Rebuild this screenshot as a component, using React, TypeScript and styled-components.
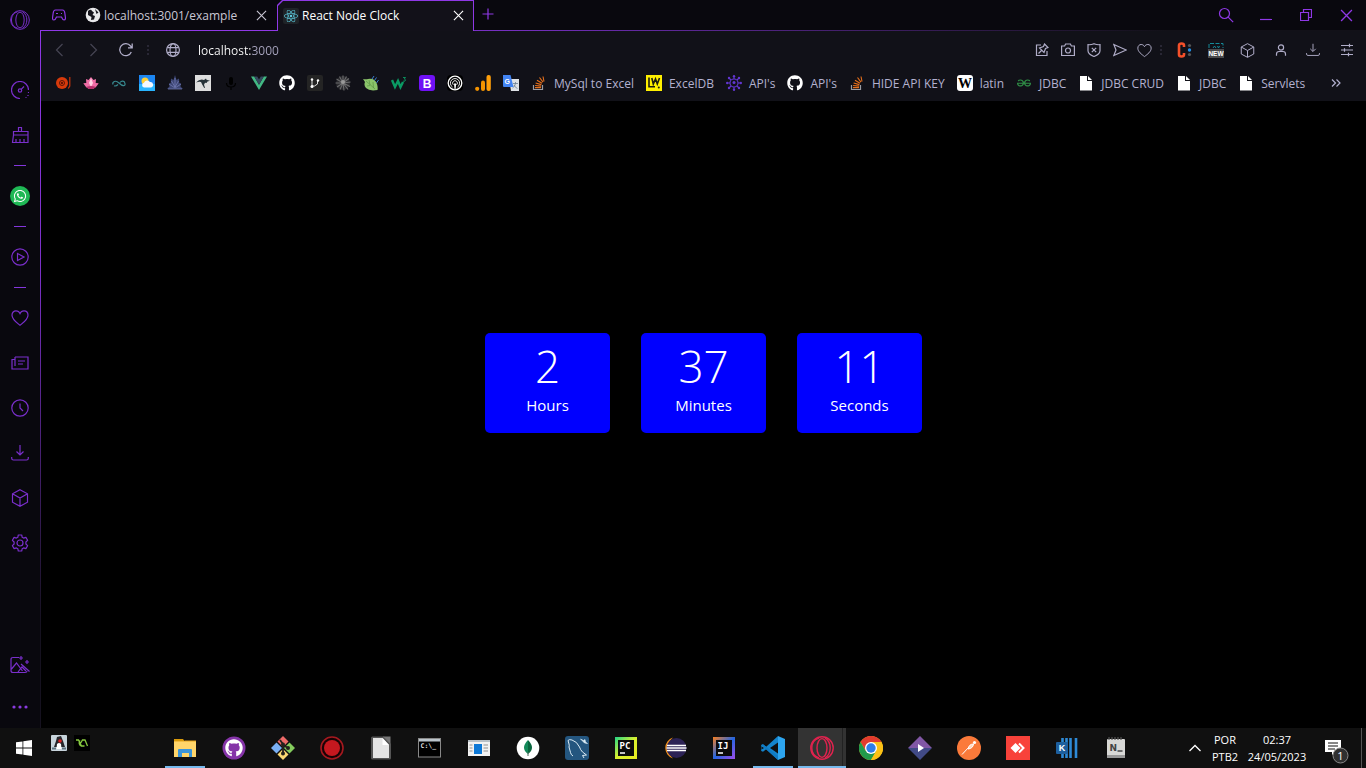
import React from 'react';
import styled, { createGlobalStyle } from 'styled-components';
import { FaGithub, FaReact, FaWhatsapp } from 'react-icons/fa';
import { SiGeeksforgeeks } from 'react-icons/si';

const Global = createGlobalStyle`
  * { box-sizing: border-box; }
  html, body { margin: 0; background: #000; }
  body, button, input { font-family: "Open Sans", "Noto Sans", sans-serif; font-size: 12px; }
  button { border: 0; padding: 0; margin: 0; background: none; color: inherit; display: flex; align-items: center; justify-content: center; flex: none; }
  a { color: inherit; text-decoration: none; }
  svg { display: block; flex: none; }
`;

const Desktop = styled.div`
  display: flex;
  flex-direction: column;
  min-height: 100vh;
  color: #fff;
`;
const BrowserWindow = styled.div`
  flex: 1;
  display: flex;
  background: #09080e;
`;
const Sidebar = styled.nav`
  width: 40px;
  display: flex;
  flex-direction: column;
  align-items: center;
  color: #7a2fcc;
`;
const SideLogo = styled.button`
  && { width: 40px; height: 40px; margin-bottom: 27px; }
`;
const SideButton = styled.button<{ $h?: number }>`
  && { width: 40px; height: ${p => p.$h ?? 45}px; padding-right: 1px; }
`;
const SideBottom = styled.div`
  margin-top: auto;
`;
const SideDivider = styled.hr`
  width: 12px;
  height: 1px;
  margin: 8px 0 7px;
  border: 0;
  background: #8436dc;
`;
const WhatsappBadge = styled.span`
  width: 20px;
  height: 20px;
  border-radius: 50%;
  background: #1fb855;
  color: #fff;
  display: grid;
  place-items: center;
`;

const Column = styled.div`
  flex: 1;
  min-width: 0;
  display: flex;
  flex-direction: column;
`;
const TabBar = styled.div`
  height: 31px;
  display: flex;
  align-items: stretch;
  color: #8f38e6;
  background: linear-gradient(90deg, #8f38e6 0%, #8f38e6 20%, #6f2db6 38%, #121118 85%) 0 30px / 100% 1px no-repeat;
`;
const TabMenu = styled.button`
  && { width: 39px; height: 30px; padding-right: 1px; }
`;
const Tab = styled.div<{ $active?: boolean }>`
  position: relative;
  width: ${p => (p.$active ? 197 : 198)}px;
  height: ${p => (p.$active ? 31 : 30)}px;
  padding: 0 9px 0 6px;
  display: flex;
  align-items: center;
  gap: 3px;
  color: ${p => (p.$active ? '#fff' : '#c9c7d4')};
  ${p => p.$active && `
    isolation: isolate;
    background: #8f38e6;
    clip-path: polygon(0 5px, 5px 0, 100% 0, 100% 100%, 0 100%);
    &::before {
      content: '';
      position: absolute;
      z-index: -1;
      inset: 1px 1px 0;
      background: #121119;
      clip-path: polygon(0 5px, 5px 0, 100% 0, 100% 100%, 0 100%);
    }
  `}
`;
const TabTitle = styled.span`
  flex: 1;
  white-space: nowrap;
`;
const TabClose = styled.button`
  && { width: 14px; height: 14px; }
`;
const NewTab = styled.button`
  && { width: 28px; height: 28px; }
`;
const WindowControls = styled.div`
  margin-left: auto;
  display: flex;
  button { width: 40px; height: 30px; }
`;
const Framed = styled.div`
  flex: 1;
  display: flex;
  flex-direction: column;
  padding-left: 1px;
  background: linear-gradient(#8f38e6 0, #7a30c6 35%, #15111f 85%) 0 0 / 1px 100% no-repeat;
`;
const Toolbar = styled.div`
  height: 38px;
  padding-left: 2px;
  display: flex;
  align-items: center;
  background: #111118;
  color: #b0adc8;
`;
const ToolButton = styled.button<{ $w: number; $dim?: boolean }>`
  && { width: ${p => p.$w}px; height: 30px; color: ${p => (p.$dim ? '#464553' : 'inherit')}; }
`;
const Dots = styled.span`
  width: 12px;
  height: 12px;
  background: radial-gradient(circle, #292735 1px, transparent 1px) 0 0 / 12px 4px;
`;
const Address = styled.input`
  flex: 1;
  min-width: 0;
  height: 24px;
  margin-left: 6px;
  padding: 0;
  border: 0;
  outline: 0;
  color: transparent;
  background: linear-gradient(90deg, #fff 53px, #a9a6c0 53px);
  background-clip: text;
  -webkit-background-clip: text;
`;
const Bookmarks = styled.div`
  height: 32px;
  padding: 0 24px 4px 14px;
  display: flex;
  align-items: center;
  gap: 12px;
  background: #111118;
  color: #b3b1d0;
`;
const Bookmark = styled.a`
  height: 24px;
  display: flex;
  align-items: center;
  gap: 7px;
  white-space: nowrap;
`;
const More = styled.button`
  && { margin-left: auto; }
`;

const Page = styled.main`
  flex: 1;
  background: #000;
  display: flex;
  align-items: center;
  justify-content: center;
  gap: 31px;
  padding-bottom: 63px;
`;
const Card = styled.section`
  width: 125px;
  height: 100px;
  padding-top: 4px;
  border-radius: 5px;
  background: #00f;
  text-align: center;
`;
const Value = styled.div`
  font-size: 44px;
  line-height: 58px;
  font-weight: 300;
`;
const Unit = styled.div`
  font-size: 15px;
  line-height: 20px;
`;

const Taskbar = styled.footer`
  height: 40px;
  display: flex;
  background: #101010;
`;
const Start = styled.button`
  && { width: 48px; height: 40px; }
`;
const Pinned = styled.div`
  width: 113px;
  padding: 7px 3px;
  display: flex;
  gap: 7px;
`;
const Apps = styled.div`
  display: flex;
  gap: 1px;
`;
const AppButton = styled.button<{ $state?: 'open' | 'focused' }>`
  && {
    width: 48px;
    height: 40px;
    background:
      ${p => (p.$state === 'open' ? 'linear-gradient(#76b9ed, #76b9ed) 50% 100% / 40px 2px no-repeat' : '')}
      ${p => (p.$state === 'focused' ? `linear-gradient(#76b9ed, #76b9ed) 0 100% / 100% 2px no-repeat,
        linear-gradient(#222, #222) 44px 0 / 1px 100% no-repeat, #333` : '')};
  }
`;
const OperaRed = styled.span`
  color: #e0234e;
`;
const Tray = styled.div`
  margin-left: auto;
  padding-right: 4px;
  display: flex;
  text-align: center;
`;
const TrayButton = styled.button<{ $w: number }>`
  && { width: ${p => p.$w}px; height: 40px; line-height: 17px; font-size: 11px; }
`;
const ShowDesktop = styled.button`
  && { width: 1px; height: 40px; background: #555; margin-left: 2px; }
`;

type P = { s?: number; children?: React.ReactNode; w?: number; vb?: number };
/* Thin stroked glyph */
const Line = ({ s = 18, w = 1.2, vb = 18, children }: P) => (
  <svg width={s} height={s} viewBox={`0 0 ${vb} ${vb}`} fill="none" stroke="currentColor" strokeWidth={w}>{children}</svg>
);
/* Filled colour icon */
const Pic = ({ s = 16, vb = 16, children }: P) => (
  <svg width={s} height={s} viewBox={`0 0 ${vb} ${vb}`}>{children}</svg>
);

const OperaGlyph = ({ s, w = 1.2 }: P) => (
  <Line s={s} vb={24} w={w}>
    <circle cx="12" cy="12" r="11.2" />
    <ellipse cx="12" cy="12" rx="5" ry="9.4" />
    <path d="M9 2.2C3 4 1.800 9 1.800 12s1.200 8 7.200 9.800M15 2.200c3.600 2 5.200 6 5.200 9.800S18.600 19.800 15 21.800" strokeWidth={w} />
  </Line>
);
const Heart = ({ s = 18 }: P) => (
  <Line s={s}><path d="M9 16.300C5.500 13.500 1 10.500 1 6.200 1 3.500 2.800 1.800 5 1.800c1.800 0 3.300 1 4 2.600.7-1.600 2.200-2.600 4-2.600 2.200 0 4 1.700 4 4.400 0 4.300-4.500 7.300-8 10.100z" /></Line>
);
const Cube = ({ s = 18 }: P) => (
  <Line s={s}><path d="M9 .8l7.500 4v8.400L9 17.200l-7.500-4V4.800zM1.500 4.800L9 9l7.500-4.200M9 9v8" /></Line>
);
const Download = ({ s = 18 }: P) => (
  <Line s={s}><path d="M9 1v9.500M5.500 7.500L9 11l3.500-3.500M.7 13v1.200q0 1.800 1.800 1.800h13q1.800 0 1.800-1.800V13" /></Line>
);
const Cross = ({ s = 12 }: P) => <Line s={s} vb={12}><path d="M1 1l10 10M11 1L1 11" /></Line>;

const StackIcon = () => (
  <Pic><path d="M2.500 10v4.500h9V10" fill="none" stroke="#9a9ca3" strokeWidth="1.200" />
    <path d="M4 12.600h6M4.100 10.500l6 .6M4.600 8l5.800 1.600M6 5.300l5 3M8.500 2.500l3.500 4.700M12 1.500l1 5" stroke="#e8701c" strokeWidth="1.100" /></Pic>
);
const FileIcon = () => (
  <Pic><path d="M2 1h7v5h5v9.500H2z" fill="#fff" /><path d="M10 1l4 4h-4z" fill="#fff" /></Pic>
);
const GitHubIcon = () => <FaGithub size={16} color="#fff" />;

type Mark = { name: string; icon: React.ReactNode; label?: string };
const marks: Mark[] = [
  { name: 'Music', icon: <Pic><circle cx="7" cy="8" r="6" fill="#d73a0b" /><circle cx="7" cy="8" r="2.500" fill="none" stroke="#5a1607" /><circle cx="7" cy="8" r=".9" fill="#300" /><path d="M14.800 2v9l-1.600 2.500" fill="none" stroke="#c5340b" strokeWidth="1.200" /></Pic> },
  { name: 'Lotus', icon: <Pic><path d="M8 2l2.500 3L13 4l-.3 4 3 .2L13 12l-3 2H6l-3-2L.3 8.200l3-.2L3 4l2.500 1z" fill="#ef6ea6" /><path d="M8 3l2 5-2 4-2-4z" fill="#ffd3e4" /><path d="M3 12q5-2 10 0l-3 2H6z" fill="#b6306c" /></Pic> },
  { name: 'Loop', icon: <Pic><path d="M2 9.500C1 7 4.500 4.500 8 8s6.500 3.500 6 .5-3.500-3-5-1M7 9.500q-2 2-4 1.300" fill="none" stroke="#37898f" strokeWidth="1.200" /></Pic> },
  { name: 'Weather', icon: <Pic><rect width="16" height="16" fill="#1c86f2" /><rect y="9" width="16" height="7" fill="#29b5ff" /><circle cx="6" cy="6" r="3.500" fill="#ffd034" /><path d="M5 12.500a2.400 2.400 0 010-4.700 3.300 3.300 0 016-.8 2.800 2.800 0 011 5.500z" fill="#f5f9ff" /></Pic> },
  { name: 'Crystal', icon: <Pic><path d="M8 0l1.500 5L12 3.500l.3 4.500 1.700.5-.5 3L16 14H0l2.500-2.500-.5-3L3.700 8 4 3.500 6.500 5z" fill="#3d4674" /><path d="M8 3v9M4.500 6L8 12l3.500-6M2 9l6 4 6-4M1 14h14" fill="none" stroke="#7a83bd" strokeWidth=".7" /></Pic> },
  { name: 'Kangaroo', icon: <Pic><rect width="16" height="16" fill="#dedede" /><path d="M1 7.500Q5 3.500 9 5l2-1.500.5 1.200 3.500 1-2.500.8-1 1.500-1.500-.3-1 2 1 3-.8.300-2-3.500L6 7Q4 6.500 1 7.500z" fill="#263238" /></Pic> },
  { name: 'Voice', icon: <Pic><rect x="6" y="2" width="4" height="8" rx="2" fill="#000" /><path d="M3.500 8q0 4 4.500 4t4.500-4M8 12v3" fill="none" stroke="#000" strokeWidth="1.200" /></Pic> },
  { name: 'Vue', icon: <Pic><path d="M0 1.500h3.200L8 9.800l4.800-8.300H16L8 15z" fill="#42b883" /><path d="M3.200 1.500h3L8 4.500l1.800-3h3L8 9.800z" fill="#35495e" /></Pic> },
  { name: 'GitHub', icon: <GitHubIcon /> },
  { name: 'Branches', icon: <Pic><rect width="16" height="16" rx="2" fill="#242424" /><path d="M5 4.500v7M5 11h2.500l3-2V5.500" fill="none" stroke="#ddd" /><circle cx="5" cy="4.500" r="1.200" fill="#fff" /><circle cx="5" cy="11.500" r="1.500" fill="#fff" /><circle cx="11" cy="5.500" r="1.200" fill="#fff" /></Pic> },
  { name: 'Shell', icon: <Pic><circle cx="8" cy="8" r="7" fill="#2b2b2f" /><g stroke="#6a6a6c" strokeWidth="1.100"><path d="M8 8L8 .5M8 8l3.500-6.500M8 8l6-4.500M8 8l7.500-1M8 8l7 3.500M8 8l5 6.500M8 8L4.500 1.500M8 8L1.500 4M8 8H.5M8 8l-6 4M8 8l-3 6.500M8 8l1 7.500" /></g><circle cx="8" cy="7" r="2" fill="#999" /></Pic> },
  { name: 'Leaf', icon: <Pic><path d="M0 4q3 .5 5 0Q12 3 14 9q1 3 .5 6-8 1.500-11.500-2Q.5 10 2 7z" fill="#8bc46a" /><path d="M3 6l9 8M6 5l1 5M10 7l.5 6M4 11l3-.5" stroke="#5a9444" fill="none" strokeWidth=".7" /><path d="M9 4l2-3M11.500 5.500l2-3M13.500 8l2-3" stroke="#3c7fd0" /></Pic> },
  { name: 'W3Schools', icon: <Pic><path d="M1 5l3 7L7 6l2.500 6L12 7" fill="none" stroke="#0a9a63" strokeWidth="2.400" /><path d="M12 2.500h2.500L13.300 4q2 .5.7 2-.8.700-2 0" fill="none" stroke="#0a9a63" strokeWidth=".9" /></Pic> },
  { name: 'Bootstrap', icon: <Pic><rect width="16" height="16" rx="3" fill="#7011f5" /><text x="8" y="12.500" textAnchor="middle" fontSize="12" fontWeight="700" fill="#fff" fontFamily="Liberation Sans">B</text></Pic> },
  { name: 'Podcast', icon: <Pic><rect width="16" height="16" rx="4" fill="#000" /><g fill="none" stroke="#fff"><circle cx="8" cy="8" r="6.800" strokeWidth="1.300" /><path d="M5.500 12a4.600 4.600 0 115 0M6.300 9.800a2.400 2.400 0 113.400 0" strokeWidth=".9" /></g><path d="M7 8.500h2.200L8.600 14H7.500z" fill="#fff" /></Pic> },
  { name: 'Analytics', icon: <Pic><rect x="11.500" y="0" width="4.300" height="16" rx="2" fill="#ff9f0a" /><rect x="6" y="5.500" width="4" height="10.500" rx="2" fill="#f59400" /><circle cx="2.200" cy="13.800" r="2.100" fill="#f59400" /></Pic> },
  { name: 'Translate', icon: <Pic><path d="M6 4h10v12H8z" fill="#dfe2e6" /><path d="M10 8.500h5M12.500 7v1.500q-.5 3-3 4.500M11 10q1 2.500 3.500 3.500" fill="none" stroke="#6b7f92" strokeWidth=".8" /><path d="M0 0h7.500l3 12H1q-1 0-1-1z" fill="#4284f3" /><text x="1.500" y="8.500" fontSize="7" fontWeight="700" fill="#fff" fontFamily="Liberation Sans">G</text></Pic> },
  { name: 'MySql to Excel', label: 'MySql to Excel', icon: <StackIcon /> },
  { name: 'ExcelDB', label: 'ExcelDB', icon: <Pic><rect width="16" height="16" fill="#fff000" /><path d="M3 2.500v9.300h6M5.800 3l1.500 6L9.500 4l1.800 5L13.500 3" fill="none" stroke="#1b1b10" strokeWidth="1.600" /><circle cx="12.800" cy="12.500" r="1" fill="#1b1b10" /></Pic> },
  { name: "API's", label: "API's", icon: <Pic><g fill="none" stroke="#6236d0" strokeWidth="1.100"><circle cx="8" cy="8" r="4" /><path d="M8 4V1M8 12v3M4 8H1M12 8h3M5 5L3 3M11 5l2-2M5 11l-2 2M11 11l2 2" /></g><g fill="#6236d0"><circle cx="8" cy="1.200" r="1.200" /><circle cx="8" cy="14.800" r="1.200" /><circle cx="1.200" cy="8" r="1.200" /><circle cx="14.800" cy="8" r="1.200" /><circle cx="3" cy="3" r="1.200" /><circle cx="13" cy="3" r="1.200" /><circle cx="3" cy="13" r="1.200" /><circle cx="13" cy="13" r="1.200" /><circle cx="8" cy="7.500" r="1.500" /></g></Pic> },
  { name: "API's on GitHub", label: "API's", icon: <GitHubIcon /> },
  { name: 'HIDE API KEY', label: 'HIDE API KEY', icon: <StackIcon /> },
  { name: 'latin', label: 'latin', icon: <Pic><rect width="16" height="16" rx="3" fill="#fff" /><text x="8" y="12.500" textAnchor="middle" fontSize="14" fontWeight="700" fill="#000" fontFamily="Liberation Serif">W</text></Pic> },
  { name: 'JDBC', label: 'JDBC', icon: <Pic><g transform="translate(1 1)"><SiGeeksforgeeks size={14} color="#2f8d46" /></g></Pic> },
  { name: 'JDBC CRUD', label: 'JDBC CRUD', icon: <FileIcon /> },
  { name: 'JDBC file', label: 'JDBC', icon: <FileIcon /> },
  { name: 'Servlets', label: 'Servlets', icon: <FileIcon /> },
];

const jet = (id: string, a: string, b: string, c: string, t: string) => (
  <Pic s={22} vb={22}>
    <defs><linearGradient id={id} x1="0" y1="0" x2="1" y2="1"><stop offset="0" stopColor={a} /><stop offset=".5" stopColor={b} /><stop offset="1" stopColor={c} /></linearGradient></defs>
    <rect width="22" height="22" fill={`url(#${id})`} /><rect x="3" y="3" width="16" height="16" fill="#0b0b0b" />
    <text x="4.500" y="11.500" fontSize="9" fontWeight="700" fill="#fff" fontFamily="DejaVu Sans Mono">{t}</text>
    <path d="M5 16h5" stroke="#fff" strokeWidth="1.500" />
  </Pic>
);

type AppDef = { name: string; icon: React.ReactNode; state?: 'open' | 'focused' };
const apps: AppDef[] = [
  { name: 'File Explorer', state: 'open', icon: <Pic s={22} vb={22}><path d="M0 2h9l1.500 2H22v2H0z" fill="#d99a0b" /><rect y="4" width="22" height="16" fill="#ffd56a" /><path d="M0 4h10l1-1h11v2H0z" fill="#e8a317" opacity=".5" /><path d="M4 20v-7q0-1 1-1h12q1 0 1 1v7h-3v-4H8v4z" fill="#3b95d9" /></Pic> },
  { name: 'GitHub Desktop', icon: <Pic s={24} vb={24}><circle cx="12" cy="12" r="11.500" fill="#8534a8" /><g transform="translate(3 3)"><FaGithub size={18} color="#fff" /></g></Pic> },
  { name: 'Git Bash', icon: <Pic s={24} vb={24}><path d="M12 0l5.500 5.500L12 11 6.500 5.500z" fill="#ee6a68" /><path d="M0 12l5.500-5.500L11 12l-5.500 5.500z" fill="#7ab0f5" /><path d="M13 12l5.500-5.500L24 12l-5.500 5.500z" fill="#84cc5d" /><path d="M12 13l5.500 5.500L12 24l-5.500-5.500z" fill="#fbd873" /><path d="M9 4l3 4v9M12 9l5 3" fill="none" stroke="#24211d" strokeWidth="1.800" /><circle cx="12" cy="17.500" r="2" fill="#24211d" /><circle cx="12" cy="8.500" r="2" fill="#24211d" /><circle cx="17" cy="12" r="2" fill="#24211d" /></Pic> },
  { name: 'Recorder', icon: <Pic s={24} vb={24}><circle cx="12" cy="12" r="11" fill="#180305" stroke="#a5191f" strokeWidth="1.600" /><circle cx="12" cy="12" r="8" fill="#c5181f" /></Pic> },
  { name: 'LibreOffice', icon: <Pic s={24} vb={24}><path d="M2 2q0-1.500 1.500-1.500H15L22 8v14q0 1.500-1.500 1.500h-17Q2 23.500 2 22z" fill="#555" /><path d="M4 2h9.500l6.500 7v13H4z" fill="#e4e4e4" /><path d="M13.500 2v7H20z" fill="#fff" /><path d="M14 .5h7.500V8z" fill="#777" /></Pic> },
  { name: 'Command Prompt', icon: <Pic s={24} vb={24}><rect x=".5" y="2.500" width="22" height="18.500" fill="#000" stroke="#888" /><rect x="1" y="3" width="21" height="2.500" fill="#bbc4cb" /><text x="2.500" y="12" fontSize="6.500" fontWeight="700" fill="#ddd" fontFamily="DejaVu Sans Mono">C:\_</text></Pic> },
  { name: 'Control Panel', icon: <Pic s={22} vb={22}><rect y="3" width="22" height="16" fill="#f2f2f2" /><rect y="3" width="22" height="2" fill="#b8c0c6" /><rect x="6" y="7" width="8" height="10" fill="#0d78d6" /><path d="M1.500 8h3M1.500 11h3M1.500 14h3M15.500 8H20M15.500 11H20M15.500 14H20" stroke="#909090" /></Pic> },
  { name: 'MongoDB Compass', icon: <Pic s={24} vb={24}><circle cx="12" cy="12" r="11.300" fill="#fff" /><path d="M12 4q-8 8 0 14z" fill="#138a5a" /><path d="M12 4q8 8 0 14z" fill="#09663e" /><path d="M12 16v4" stroke="#4a6a5a" /></Pic> },
  { name: 'MySQL Workbench', icon: <Pic s={24} vb={24}><rect width="24" height="24" rx="3" fill="#24567f" /><path d="M8 20q-2-1-2.500-3.500L4 11q.5-1 0-3L3 4.500q1-1.500 4-.5 5 1.500 7.500 7 1 3 3 5l4 3-4 .5 1.500 2.500" fill="none" stroke="#dcecf5" strokeWidth="1" /><path d="M15.500 3l3 1.500 1.500-1 .5 2.500 2 1.500-3-.5z" stroke="#dcecf5" fill="#dcecf5" strokeWidth=".6" /></Pic> },
  { name: 'PyCharm', icon: jet('pc', '#21d789', '#d9f02e', '#e8ea20', 'PC') },
  { name: 'Eclipse', icon: <Pic s={24} vb={24}><path d="M10 1.500a11 11 0 000 21A14 14 0 0110 1.500z" fill="#f7941e" /><circle cx="13.500" cy="12" r="10" fill="#2c2255" /><path d="M4 9.500h19M3.500 12h20M4 14.500h19" stroke="#fff" strokeWidth="1.400" /></Pic> },
  { name: 'IntelliJ IDEA', icon: jet('ij', '#fc801d', '#2465e0', '#a04dea', 'IJ') },
  { name: 'Visual Studio Code', state: 'open', icon: <Pic s={24} vb={24}><path d="M17 0L5.200 10.700 2 8.200.2 9v6l1.800.8 3.200-2.500L17 24z" fill="#1484cc" /><path d="M17 6.500L9 12l8 5.500z" fill="#101010" /><path d="M.5 10.500V13.500L3 12z" fill="#101010" /><path d="M2 8.200L17 20v4L.2 9z" fill="#0f7bc4" /><path d="M17 0l7 3v18l-7 3z" fill="#2da5ef" /></Pic> },
  { name: 'Opera GX', state: 'focused', icon: <OperaRed><OperaGlyph s={24} w={1.4} /></OperaRed> },
  { name: 'Google Chrome', icon: <Pic s={24} vb={24}><circle cx="12" cy="12" r="12" fill="#fbc116" /><path d="M1.600 6a12 12 0 0120.800 0H12L6.800 15z" fill="#e33b2e" /><path d="M1.600 6a12 12 0 0010.400 18l5.200-9H6.800z" fill="#219a4b" /><path d="M22.400 6A12 12 0 0112 24l5.200-9L12 6z" fill="#fbc116" /><circle cx="12" cy="12" r="6" fill="#fff" /><circle cx="12" cy="12" r="4.700" fill="#2f7de9" /></Pic> },
  { name: 'Media Player', icon: <Pic s={24} vb={24}><path d="M0 12L12 0l12 12z" fill="#8157a5" /><path d="M0 12h24L12 24z" fill="#414a86" /><path d="M10 8l6 4-6 4z" fill="#fff" /></Pic> },
  { name: 'Postman', icon: <Pic s={24} vb={24}><circle cx="12" cy="12" r="12" fill="#fb7a3a" /><path d="M5 18.500L12 11M11 13q1-5 5.500-5-.5 4.500-5.500 5z" stroke="#fff" fill="#ffd8c2" strokeWidth="1" /><circle cx="17.500" cy="6.500" r="1.600" fill="#fff" /></Pic> },
  { name: 'AnyDesk', icon: <Pic s={24} vb={24}><rect width="24" height="24" fill="#f8423a" /><path d="M4.500 12l5-5 5 5-5 5z" fill="#fff" /><path d="M13 7.500l4.500 4.500-4.500 4.500" fill="none" stroke="#fff" strokeWidth="2" /></Pic> },
  { name: 'Kindle', icon: <Pic s={24} vb={24}><path d="M7.500 2v20M11.500 2v20M15.500 2v20M21 2v20" stroke="#2e8ad6" strokeWidth="2.600" /><rect x="1" y="6" width="12" height="12" rx="1" fill="#1d5f9e" /><text x="7" y="15" textAnchor="middle" fontSize="9" fontWeight="700" fill="#fff" fontFamily="Liberation Sans">K</text></Pic> },
  { name: 'Notepad', icon: <Pic s={22} vb={22}><rect x="2" y="2" width="18" height="19" rx="1" fill="#d8d8d6" /><rect x="2" y="18" width="18" height="3" fill="#999" /><path d="M4 0v3M7 0v3M10 0v3M13 0v3M16 0v3" stroke="#555" strokeWidth="1.200" /><text x="4.500" y="14" fontSize="9" fontWeight="700" fill="#444" fontFamily="DejaVu Sans">N</text><path d="M12.500 14h5" stroke="#444" strokeWidth="1.500" /></Pic> },
];

const times: [string, string][] = [['2', 'Hours'], ['37', 'Minutes'], ['11', 'Seconds']];

export default function App() {
  return (
    <Desktop>
      <Global />
      <BrowserWindow>
        <Sidebar aria-label="Sidebar">
          <SideLogo aria-label="Opera menu"><OperaGlyph s={20} /></SideLogo>
          <SideButton aria-label="GX Control"><Line><path d="M9 17.500A8.500 8.500 0 1117.500 9" /><path d="M17.500 11v1M17 14v1M14.500 16.500h1" /><circle cx="9" cy="9.500" r="1.700" /><path d="M10.200 8.300L13 5.500" /></Line></SideButton>
          <SideButton aria-label="GX Cleaner"><Line><path d="M7.500 5.500V1.500h3v4M2.500 9V5.500h14.500V9zM2.500 9L1.500 16.500H17V9M5 13v3.500M9 13v3.500M13 13v3.500" /></Line></SideButton>
          <SideDivider />
          <SideButton aria-label="WhatsApp"><WhatsappBadge><FaWhatsapp size={14} /></WhatsappBadge></SideButton>
          <SideDivider />
          <SideButton aria-label="Player"><Line><circle cx="9" cy="9" r="8.200" /><path d="M6.500 5.500L13 9l-6.500 3.500z" /></Line></SideButton>
          <SideDivider />
          <SideButton aria-label="Favourites"><Heart /></SideButton>
          <SideButton aria-label="News"><Line><path d="M4 3h13v12H1V5.500h3M4 3v9M7 7h7M7 10h5" /></Line></SideButton>
          <SideButton aria-label="History"><Line><circle cx="9" cy="9" r="8.200" /><path d="M9 4.500V9l3 3" /></Line></SideButton>
          <SideButton aria-label="Downloads"><Download /></SideButton>
          <SideButton aria-label="Extensions"><Cube /></SideButton>
          <SideButton aria-label="Settings"><Line><circle cx="9" cy="9" r="3" /><path d="M7.300 1h3.400l.5 2.300 1.400.8 2.300-.7 1.700 2.900-1.700 1.700v2l1.700 1.700-1.700 2.900-2.300-.7-1.400.8-.5 2.300H7.300l-.5-2.300-1.400-.8-2.300.7-1.700-2.900L3.100 10V8L1.400 6.300l1.700-2.900 2.300.7 1.400-.8z" strokeLinejoin="round" /></Line></SideButton>
          <SideBottom>
            <SideButton $h={42} aria-label="Wallpaper"><Line s={20} vb={20}><path d="M9 2.500H3Q1 2.500 1 4.500v11q0 2 2 2h12q2 0 2-1.500M1.500 14L6.500 8l6 8M8 17l4-5 4 4M11 9l8.500 7.500M11 1v4M9 3h4M17 5v4M15 7h4" /></Line></SideButton>
            <SideButton $h={42} aria-label="More"><svg width="16" height="4" viewBox="0 0 16 4" fill="#8a3be0"><circle cx="2" cy="2" r="1.600" /><circle cx="8" cy="2" r="1.600" /><circle cx="14" cy="2" r="1.600" /></svg></SideButton>
          </SideBottom>
        </Sidebar>
        <Column>
          <TabBar>
            <TabMenu aria-label="Workspaces"><Line s={14} vb={14}><path d="M3.500 2h7q2 0 2.300 3l.7 5q0 2-1.500 2-1.300 0-2.500-3h-5q-1.200 3-2.500 3-1.500 0-1.500-2l.7-5q.3-3 2.300-3zM4 5.500h2M9 5.500h1" /></Line></TabMenu>
            <Tab>
              <Pic><circle cx="8" cy="8" r="7.300" fill="#e8e8ea" /><path d="M3 4q3-2.500 4 0l2 1.500L7.500 8l2.500 1-1 3.500-3 .5.500-3L3 8zM10 2l3.500 3.500-2 1.500z" fill="#15141b" /></Pic>
              <TabTitle>localhost:3001/example</TabTitle>
              <TabClose aria-label="Close tab"><Cross s={11} /></TabClose>
            </Tab>
            <Tab $active>
              <Pic><rect width="16" height="16" rx="2" fill="#1f2328" /><g transform="translate(1 1)"><FaReact size={14} color="#5cc8dc" /></g></Pic>
              <TabTitle>React Node Clock</TabTitle>
              <TabClose aria-label="Close tab"><Cross s={11} /></TabClose>
            </Tab>
            <NewTab aria-label="New tab"><Line s={12} vb={12}><path d="M6 .5v11M.5 6h11" /></Line></NewTab>
            <WindowControls>
              <button aria-label="Search"><Line s={16} vb={16}><circle cx="6.500" cy="6.500" r="5" /><path d="M10.200 10.200l5 5" /></Line></button>
              <button aria-label="Minimize"><Line s={12} vb={12}><path d="M0 10.500h12" /></Line></button>
              <button aria-label="Restore"><Line s={12} vb={12}><path d="M.5 3.500h8v8h-8zM3.500 3.500v-3h8v8h-3" /></Line></button>
              <button aria-label="Close"><Cross s={13} /></button>
            </WindowControls>
          </TabBar>
          <Framed>
            <Toolbar>
              <ToolButton $w={33} $dim aria-label="Back"><Line s={14} vb={14}><path d="M9.500 1L3.500 7l6 6" /></Line></ToolButton>
              <ToolButton $w={33} $dim aria-label="Forward"><Line s={14} vb={14}><path d="M4.500 1l6 6-6 6" /></Line></ToolButton>
              <ToolButton $w={33} aria-label="Reload"><Line s={14} vb={14} w={1.3}><path d="M12.300 9A6 6 0 1111.500 3l1.500 1.500M13.200.5v4.300H9" /></Line></ToolButton>
              <Dots />
              <ToolButton $w={38} aria-label="Site information"><Line s={14} vb={14}><circle cx="7" cy="7" r="6.400" /><ellipse cx="7" cy="7" rx="3" ry="6.400" /><path d="M1.300 4.700h11.400M1.300 9.300h11.400" /></Line></ToolButton>
              <Address aria-label="Address" defaultValue="localhost:3000" />
              <ToolButton $w={26} aria-label="Pin"><Line s={14} vb={14}><path d="M6 2H1.500v10.500H12V8M9.500 1l3.500 3.500-2.500 1-1.500 4L4.500 5l4-1.500zM6.500 7.500L3.500 10.500" /></Line></ToolButton>
              <ToolButton $w={26} aria-label="Snapshot"><Line s={14} vb={14}><path d="M.6 3h3l1-2h4.800l1 2h3v9.500H.6z" /><circle cx="7" cy="7.500" r="2.500" /></Line></ToolButton>
              <ToolButton $w={26} aria-label="Ad blocker"><Line s={14} vb={14}><path d="M7 .7q3 1.300 6 1v6q0 3.500-6 5.800Q1 11.200 1 7.700v-6q3 .3 6-1zM4.800 4.800l4.400 4.400M9.200 4.800L4.800 9.200" /></Line></ToolButton>
              <ToolButton $w={26} aria-label="Send"><Line s={14} vb={14}><path d="M.8 1.500L13.300 7 .8 12.500 3 7z" /></Line></ToolButton>
              <ToolButton $w={22} aria-label="Favourite"><Heart s={15} /></ToolButton>
              <Dots />
              <ToolButton $w={34} aria-label="Colour picker"><Pic><path d="M8 5V3.500Q8 1.500 5.500 1.500T3 3.500v9q0 2 2.500 2T8 12.500V11" fill="none" stroke="#f4502a" strokeWidth="2.600" /><circle cx="13.500" cy="3.500" r="1.600" fill="#555" /><circle cx="13.500" cy="8" r="1.700" fill="#1f8fe8" /><circle cx="13.500" cy="12.500" r="1.600" fill="#555" /></Pic></ToolButton>
              <ToolButton $w={30} aria-label="Capture"><Pic><path d="M1 6V1.500h14V6" fill="none" stroke="#148a98" strokeDasharray="4 1.500" /><path d="M5 6l1.500-2L8 6M9.500 4l1 2 1-2" fill="none" stroke="#148a98" /><rect y="7" width="16" height="9" fill="#4a4a4c" /><text x="8" y="14" textAnchor="middle" fontSize="6.500" fontWeight="700" fill="#fff" fontFamily="Liberation Sans">NEW</text></Pic></ToolButton>
              <ToolButton $w={32} aria-label="Extensions"><Cube s={15} /></ToolButton>
              <ToolButton $w={36} aria-label="Profile"><Line s={14} vb={14}><circle cx="7" cy="4.500" r="2.600" /><path d="M2.500 12.800V11q0-2.500 2.500-2.500h4q2.500 0 2.500 2.500v1.800" /></Line></ToolButton>
              <ToolButton $w={28} aria-label="Downloads"><Download s={14} /></ToolButton>
              <ToolButton $w={39} aria-label="Easy setup"><Line s={14} vb={14}><path d="M1 2.500h12M1 7h12M1 11.500h12M9.500.8v3.400M4.500 5.300v3.400M8.500 9.800v3.400" /></Line></ToolButton>
            </Toolbar>
            <Bookmarks>
              {marks.map(m => (
                <Bookmark key={m.name} href="#" aria-label={m.name}>{m.icon}{m.label}</Bookmark>
              ))}
              <More aria-label="More bookmarks"><Line s={12} vb={12} w={1.2}><path d="M2 2.500L5.500 6 2 9.500M6.500 2.500L10 6 6.500 9.500" /></Line></More>
            </Bookmarks>
            <Page>
              {times.map(([v, u]) => (
                <Card key={u}><Value>{v}</Value><Unit>{u}</Unit></Card>
              ))}
            </Page>
          </Framed>
        </Column>
      </BrowserWindow>
      <Taskbar>
        <Start aria-label="Start"><Pic><path d="M0 2.300l6.500-.9v6.200H0zM7.300 1.300L16 0v7.600H7.300zM0 8.400h6.500v6.200L0 13.700zM7.300 8.400H16V16l-8.700-1.200z" fill="#fff" /></Pic></Start>
        <Pinned>
          <Pic><rect width="16" height="16" rx="1" fill="#c8d4dc" /><path d="M6 2l4-1 2 5 2 6H3l2-6z" fill="#26262b" /><path d="M6 9q2-2 4 0l.5 5h-5z" fill="#fff" /><circle cx="9" cy="6" r="1.800" fill="#d92020" /><path d="M1 13.500h4M11 13.500h4" stroke="#5f7380" strokeWidth="2" /></Pic>
          <Pic><rect width="16" height="16" fill="#000" /><path d="M2 5h2.500l3 6h3M5.500 10L8.500 5H11l2.500 6M6 5.500q-2 3 1 5.500" fill="none" stroke="#86c93f" strokeWidth="1.300" /></Pic>
        </Pinned>
        <Apps>
          {apps.map(a => (
            <AppButton key={a.name} $state={a.state} aria-label={a.name}>{a.icon}</AppButton>
          ))}
        </Apps>
        <Tray>
          <TrayButton $w={30} aria-label="Show hidden icons"><Line s={12} vb={12} w={1.3}><path d="M.5 9L6 3.500 11.500 9" /></Line></TrayButton>
          <TrayButton $w={30}>POR<br />PTB2</TrayButton>
          <TrayButton $w={74}>02:37<br />24/05/2023</TrayButton>
          <TrayButton $w={45} aria-label="Notifications"><Pic s={32} vb={32}><path d="M4 8h16v12h-6l-3 3v-3H4z" fill="#fff" /><path d="M7 11h10M7 14h10M7 17h7" stroke="#101010" /><circle cx="19.500" cy="23.500" r="7.500" fill="#303030" stroke="#888" /><text x="19.500" y="27.500" textAnchor="middle" fontSize="11" fill="#fff" fontFamily="Open Sans">1</text></Pic></TrayButton>
          <ShowDesktop aria-label="Show desktop" />
        </Tray>
      </Taskbar>
    </Desktop>
  );
}
